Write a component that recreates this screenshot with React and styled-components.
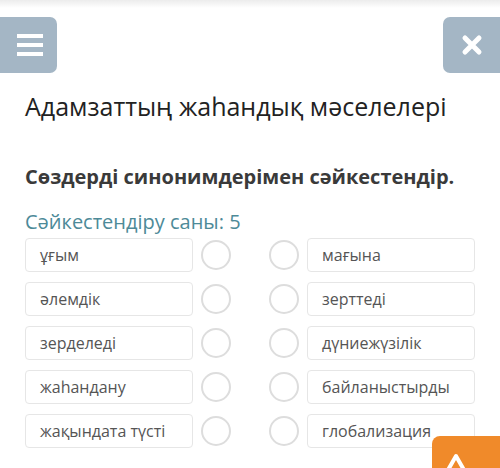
import React from 'react';
import styled, {createGlobalStyle} from "styled-components";

const pairs = [
  ["ұғым", "мағына"],
  ["әлемдік", "зерттеді"],
  ["зерделеді", "дүниежүзілік"],
  ["жаһандану", "байланыстырды"],
  ["жақындата түсті", "глобализация"],
];

const App = () => {
  return (
    <Page>
      <GlobalStyle/>
      <TopShade/>
      <Toolbar>
        <SideButton side="left">
          <MenuLines>
            <span/><span/><span/>
          </MenuLines>
        </SideButton>
        <SideButton side="right">
          <svg width="22" height="22" viewBox="0 0 22 22">
            <path d="M4 4 L18 18 M18 4 L4 18" stroke="#fff" strokeWidth="5" strokeLinecap="round"/>
          </svg>
        </SideButton>
      </Toolbar>
      <Content>
        <Title>Адамзаттың жаһандық мәселелері</Title>
        <Task>Сөздерді синонимдерімен сәйкестендір.</Task>
        <Count>Сәйкестендіру саны: 5</Count>
        <Rows>
          {pairs.map(([left, right]) => (
            <Row key={left}>
              <Word>{left}</Word>
              <Dot/>
              <Dot/>
              <Word>{right}</Word>
            </Row>
          ))}
        </Rows>
      </Content>
      <ScrollUp>
        <svg width="26" height="22" viewBox="0 0 26 22">
          <path d="M5 20 L13 6 L21 20" fill="none" stroke="#fff" strokeWidth="4" strokeLinejoin="round"/>
        </svg>
      </ScrollUp>
    </Page>
  );
};

const GlobalStyle = createGlobalStyle`
  body {
    margin: 0;
    background: #fff;
    font-family: "Open Sans", "Noto Sans", sans-serif;
  }
`;

const Page = styled.div`
  position: relative;
  width: 500px;
  height: 468px;
  overflow: hidden;
  background: #fff;
`;

const TopShade = styled.div`
  height: 8px;
  background: linear-gradient(#ececec, #fff);
`;

const Toolbar = styled.div`
  display: flex;
  justify-content: space-between;
  padding-top: 9px;
`;

const SideButton = styled.div`
  width: 57px;
  height: 56px;
  background: #a4b6c5;
  display: flex;
  align-items: center;
  justify-content: center;
  border-radius: ${p => p.side === "left" ? "0 7px 7px 0" : "7px 0 0 7px"};
`;

const MenuLines = styled.div`
  display: flex;
  flex-direction: column;
  gap: 5px;
  margin-left: 2px;

  & > span {
    display: block;
    width: 26px;
    height: 4px;
    background: #fff;
  }
`;

const Content = styled.div`
  padding: 0 25px;
`;

const Title = styled.div`
  font-size: 25px;
  color: #222;
  margin-top: 17px;
  line-height: 32px;
`;

const Task = styled.div`
  font-size: 20px;
  font-weight: 700;
  color: #3a3a3a;
  margin-top: 42px;
  line-height: 26px;
`;

const Count = styled.div`
  font-size: 20px;
  color: #4d8a98;
  margin-top: 19px;
  line-height: 26px;
`;

const Rows = styled.div`
  display: flex;
  flex-direction: column;
  gap: 10px;
  margin-top: 3px;
`;

const Row = styled.div`
  display: flex;
  align-items: center;
  height: 34px;
`;

const Word = styled.div`
  width: 168px;
  height: 34px;
  box-sizing: border-box;
  border: 1px solid #e6e6e6;
  border-radius: 4px;
  padding-left: 14px;
  display: flex;
  align-items: center;
  font-size: 16px;
  color: #555;
`;

const Dot = styled.div`
  width: 30px;
  height: 30px;
  box-sizing: border-box;
  border: 2px solid #ddd;
  border-radius: 50%;
  margin-left: 8px;

  & + & {
    margin-left: 38px;
    margin-right: 8px;
  }
`;

const ScrollUp = styled.div`
  position: absolute;
  left: 432px;
  top: 436px;
  width: 80px;
  height: 50px;
  background: #f08a2a;
  border-radius: 8px;
  display: flex;
  justify-content: flex-start;
  padding-left: 11px;
  padding-top: 14px;
  box-sizing: border-box;
`;

export default App;
